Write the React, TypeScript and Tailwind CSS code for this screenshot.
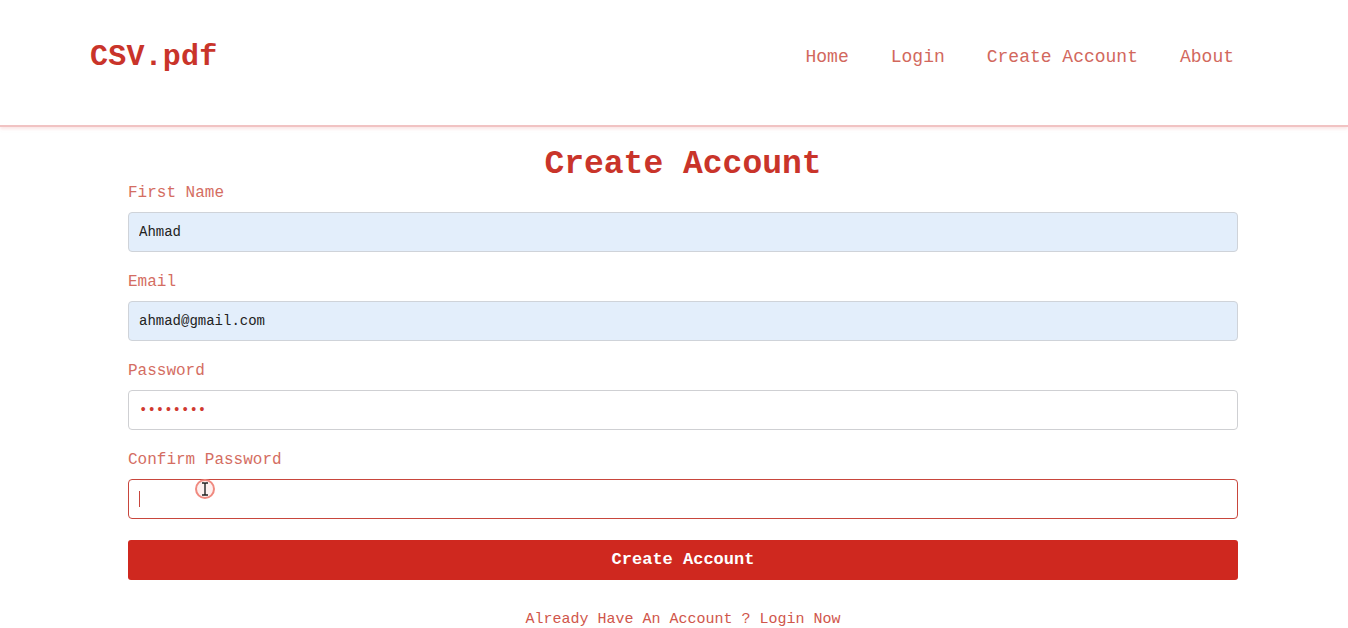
import React from 'react';

const inputBase =
    "w-full h-10 px-[10px] rounded-[4px] border text-[14px] outline-none font-['Liberation_Mono',monospace]";

const App: React.FC = () => {
    const [firstName, setFirstName] = React.useState('Ahmad');
    const [email, setEmail] = React.useState('ahmad@gmail.com');
    const [password, setPassword] = React.useState('password');
    const [confirm, setConfirm] = React.useState('');

    return (
        <div className="min-h-screen bg-white font-['Liberation_Mono','Courier_New',monospace]">
            {/* Header */}
            <header className="h-[127px] pt-[39px] border-b-2 border-[#f1c3c3] shadow-[0_2px_3px_rgba(240,180,180,0.35)]">
                <div className="flex items-center justify-between h-9 pl-[90px] pr-[114px]">
                    <a className="text-[30px] font-bold text-[#c9342a] tracking-[0.2px]">CSV.pdf</a>
                    <nav className="flex items-center gap-[42px] text-[18px] text-[#d2685d]">
                        <a>Home</a>
                        <a>Login</a>
                        <a>Create Account</a>
                        <a>About</a>
                    </nav>
                </div>
            </header>

            {/* Signup form */}
            <main className="ml-[128px] w-[1110px] pt-[20px]">
                <h1 className="h-9 leading-9 text-center text-[33px] font-bold text-[#c9342a]">
                    Create Account
                </h1>

                <form onSubmit={e => e.preventDefault()}>
                    <label className="block h-5 leading-5 text-[16px] text-[#d46d62] mb-[9px]">First Name</label>
                    <input
                        type="text"
                        value={firstName}
                        onChange={e => setFirstName(e.target.value)}
                        className={`${inputBase} bg-[#e3eefb] border-[#cfd3d9] text-[#222]`}
                    />

                    <label className="block h-5 leading-5 text-[16px] text-[#d46d62] mt-[20px] mb-[9px]">Email</label>
                    <input
                        type="email"
                        value={email}
                        onChange={e => setEmail(e.target.value)}
                        className={`${inputBase} bg-[#e3eefb] border-[#cfd3d9] text-[#222]`}
                    />

                    <label className="block h-5 leading-5 text-[16px] text-[#d46d62] mt-[20px] mb-[9px]">Password</label>
                    <input
                        type="password"
                        value={password}
                        onChange={e => setPassword(e.target.value)}
                        className={`${inputBase} bg-white border-[#cfd0d3] text-[#d0392f]`}
                    />

                    <label className="block h-5 leading-5 text-[16px] text-[#d46d62] mt-[20px] mb-[9px]">Confirm Password</label>
                    <div className="relative">
                        <input
                            type="password"
                            value={confirm}
                            onChange={e => setConfirm(e.target.value)}
                            className={`${inputBase} bg-white border-[#c8463d] text-[#d0392f]`}
                        />
                        {/* caret */}
                        <span className="absolute left-[11px] top-3 w-px h-4 bg-[#c8463d]" />
                        {/* recorded mouse cursor */}
                        <span className="absolute left-[67px] top-0 w-[20px] h-[20px] rounded-full border-2 border-[#f08a80] bg-[#fde8e6]/60 flex items-center justify-center">
                            <svg width="8" height="14" viewBox="0 0 8 14" fill="none" stroke="#222" strokeWidth="1.4">
                                <path d="M1 1h2.2q0.8 0 0.8 1v10q0 1-0.8 1H1M7 1H4.8q-0.8 0-0.8 1M7 13H4.8q-0.8 0-0.8-1" />
                            </svg>
                        </span>
                    </div>

                    <button
                        type="submit"
                        className="mt-[21px] w-full h-10 rounded-[3px] bg-[#cf281f] text-white text-[17px] font-bold"
                    >
                        Create Account
                    </button>
                </form>

                <p className="mt-[30px] h-5 leading-5 text-center text-[15px] text-[#d0564b]">
                    Already Have An Account ? Login Now
                </p>
            </main>
        </div>
    );
};

export default App;
